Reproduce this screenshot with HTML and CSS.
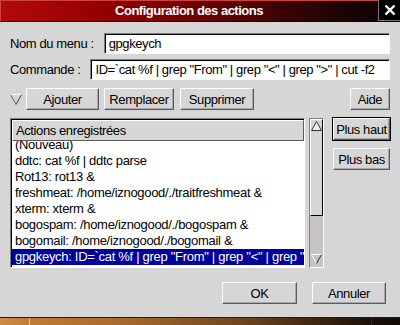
FILE: index.html
```html
<!DOCTYPE html>
<html lang="fr">
<head>
  <meta charset="UTF-8" />
  <title>Configuration des actions</title>
  <link rel="stylesheet" href="styles.css">
</head>
<body>
  <div class="dialog">
    <div class="titlebar">
      <div class="title">Configuration des actions</div>
      <div class="close">
        <svg width="12" height="12" viewBox="0 0 12 12"><path d="M1.5 1.5 L10.5 10.5 M10.5 1.5 L1.5 10.5" stroke="#fff" stroke-width="2.4" fill="none"/></svg>
      </div>
    </div>

    <div class="content">
      <div class="field-row">
        <label>Nom du menu :</label>
        <div class="entry">gpgkeych</div>
      </div>
      <div class="field-row second">
        <label>Commande :</label>
        <div class="entry">ID=`cat %f | grep "From" | grep "&lt;" | grep "&gt;" | cut -f2</div>
      </div>

      <div class="button-row">
        <svg class="arrow" width="12" height="11" viewBox="0 0 12 11">
          <path d="M0.5 0.5 L6 10.5" stroke="#666" fill="none"/>
          <path d="M0.5 0.5 L11.5 0.5" stroke="#fff" fill="none"/>
          <path d="M11.5 0.5 L6 10.5" stroke="#444" fill="none"/>
        </svg>
        <button class="btn w-ajouter">Ajouter</button>
        <button class="btn w-remplacer">Remplacer</button>
        <button class="btn w-supprimer">Supprimer</button>
        <span class="spacer"></span>
        <button class="btn w-aide">Aide</button>
      </div>

      <div class="list-area">
        <div class="list">
          <div class="list-header">Actions enregistrées</div>
          <div class="list-body">
            <div class="rows">
              <div class="row">(Nouveau)</div>
              <div class="row">ddtc: cat %f | ddtc parse</div>
              <div class="row">Rot13: rot13 &amp;</div>
              <div class="row">freshmeat: /home/iznogood/./traitfreshmeat &amp;</div>
              <div class="row">xterm: xterm &amp;</div>
              <div class="row">bogospam: /home/iznogood/./bogospam &amp;</div>
              <div class="row">bogomail: /home/iznogood/./bogomail &amp;</div>
              <div class="row selected">gpgkeych: ID=`cat %f | grep "From" | grep "&lt;" | grep "&gt;" | cut -f2</div>
            </div>
          </div>
        </div>

        <div class="scrollbar">
          <div class="thumb">
            <svg class="sb-arrow" width="11" height="10" viewBox="0 0 11 10">
              <path d="M5.5 0.5 L0.5 9.5 L10.5 9.5 Z" fill="#eee" stroke="#333"/>
            </svg>
          </div>
          <div class="trough"></div>
          <svg class="sb-arrow down" width="11" height="10" viewBox="0 0 11 10">
            <path d="M0.5 0.5 L5.5 9.5" stroke="#fff" fill="none"/>
            <path d="M10.5 0.5 L5.5 9.5" stroke="#333" fill="none"/>
            <path d="M0.5 0.5 L10.5 0.5" stroke="#fff" fill="none"/>
          </svg>
        </div>

        <div class="side-buttons">
          <button class="btn side focused">Plus haut</button>
          <button class="btn side">Plus bas</button>
        </div>
      </div>

      <div class="bottom-row">
        <button class="btn w-ok">OK</button>
        <button class="btn w-annuler">Annuler</button>
      </div>
    </div>

    <div class="desktop"></div>
  </div>
</body>
</html>
```

FILE: styles.css
```css
html, body {
  margin: 0;
  padding: 0;
}
body {
  width: 400px;
  height: 325px;
  overflow: hidden;
  background: #d6d6d6;
  font-family: "Liberation Sans", Arial, sans-serif;
  font-size: 13px;
  letter-spacing: -0.4px;
  color: #000;
}
.dialog {
  width: 400px;
  height: 325px;
  display: flex;
  flex-direction: column;
}

/* title bar */
.titlebar {
  height: 21px;
  display: flex;
  border-bottom: 1px solid #1a0000;
  background: linear-gradient(to right, #b30a0a 0%, #960000 25%, #6a0000 50%, #380404 72%, #180404 88%, #120303 100%);
  box-shadow: inset 1px 1px 0 #d04040;
}
.title {
  flex: 1;
  text-align: center;
  color: #fff;
  font-weight: bold;
  font-size: 13px;
  letter-spacing: -0.5px;
  line-height: 21px;
}
.close {
  width: 21px;
  height: 20px;
  background: #000;
  border-left: 1px solid #777;
  border-bottom: 1px solid #777;
  display: flex;
  align-items: center;
  justify-content: center;
}

/* dialog body */
.content {
  flex: 1;
  padding: 11px 10px 0 10px;
  display: flex;
  flex-direction: column;
}
.field-row {
  display: flex;
  align-items: center;
  height: 21px;
}
.field-row.second {
  margin-top: 4px;
  height: 22px;
}
.field-row label {
  margin-right: 10px;
  white-space: nowrap;
}
.entry {
  flex: 1;
  height: 19px;
  line-height: 19px;
  padding-left: 4px;
  background: #fff;
  border: 1px solid;
  border-color: #808080 #fff #fff #808080;
  box-shadow: inset 1px 1px 0 #000;
  white-space: nowrap;
  overflow: hidden;
}

.btn {
  font-family: "Liberation Sans", Arial, sans-serif;
  font-size: 13px;
  letter-spacing: -0.4px;
  color: #000;
  background: #d6d6d6;
  border: 1px solid;
  border-color: #fff #5a5a5a #5a5a5a #fff;
  box-shadow: inset -1px -1px 0 #a8a8a8;
  padding: 0;
  margin: 0;
  height: 22px;
}

.button-row {
  margin-top: 8px;
  display: flex;
  align-items: center;
}
.arrow {
  margin: 0 4px 0 0;
}
.w-ajouter { width: 73px; }
.w-remplacer { width: 70px; margin-left: 5px; }
.w-supprimer { width: 74px; margin-left: 6px; }
.w-aide { width: 40px; }
.spacer { flex: 1; }

/* list + scrollbar */
.list-area {
  margin-top: 8px;
  height: 150px;
  display: flex;
}
.list {
  width: 292px;
  display: flex;
  flex-direction: column;
  background: #fff;
  border: 1px solid;
  border-color: #808080 #fff #fff #808080;
  box-shadow: inset 1px 1px 0 #000;
  padding: 1px 0 0 1px;
}
.list-header {
  height: 19px;
  line-height: 19px;
  padding-left: 3px;
  background: #d6d6d6;
  border: 1px solid;
  border-color: #fff #5a5a5a #5a5a5a #fff;
}
.list-body {
  flex: 1;
  overflow: hidden;
}
.rows {
  margin-top: -4px;
}
.row {
  height: 16px;
  line-height: 16px;
  padding-left: 3px;
  letter-spacing: -0.3px;
  white-space: nowrap;
  overflow: hidden;
}
.row.selected {
  background: #00009c;
  color: #fff;
}

.scrollbar {
  width: 14px;
  margin-left: 4px;
  display: flex;
  flex-direction: column;
  background: #c6c2c6;
  border: 1px solid;
  border-color: #808080 #fff #fff #808080;
}
.thumb {
  height: 97px;
  background: #d6d6d6;
  border: 1px solid;
  border-color: #fff #000 #000 #fff;
  display: flex;
  justify-content: center;
  padding-top: 1px;
  box-sizing: border-box;
}
.trough {
  flex: 1;
}
.sb-arrow {
  display: block;
}
.sb-arrow.down {
  margin: 0 0 3px 1px;
}

.side-buttons {
  margin-left: 9px;
  display: flex;
  flex-direction: column;
  gap: 8px;
}
.btn.side {
  width: 57px;
}
.btn.focused {
  outline: 1px solid #000;
}

.bottom-row {
  margin-top: 14px;
  display: flex;
  justify-content: flex-end;
  padding-right: 4px;
}
.w-ok { width: 75px; }
.w-annuler { width: 74px; margin-left: 15px; }

/* desktop strip under the window */
.desktop {
  height: 7px;
  border-top: 1px solid #2a1a0a;
  background: linear-gradient(to right, #d08a44 0%, #c07a34 8%, #a86a2c 30%, #6e4620 60%, #3a2410 80%, #1a1008 93%, #100a04 100%);
  position: relative;
}
.desktop::before {
  content: "";
  position: absolute;
  left: 29px;
  top: 0;
  width: 1px;
  height: 7px;
  background: #f0c080;
}
.desktop::after {
  content: "";
  position: absolute;
  left: 371px;
  top: 0;
  width: 1px;
  height: 7px;
  background: #2a2a2a;
}
```
